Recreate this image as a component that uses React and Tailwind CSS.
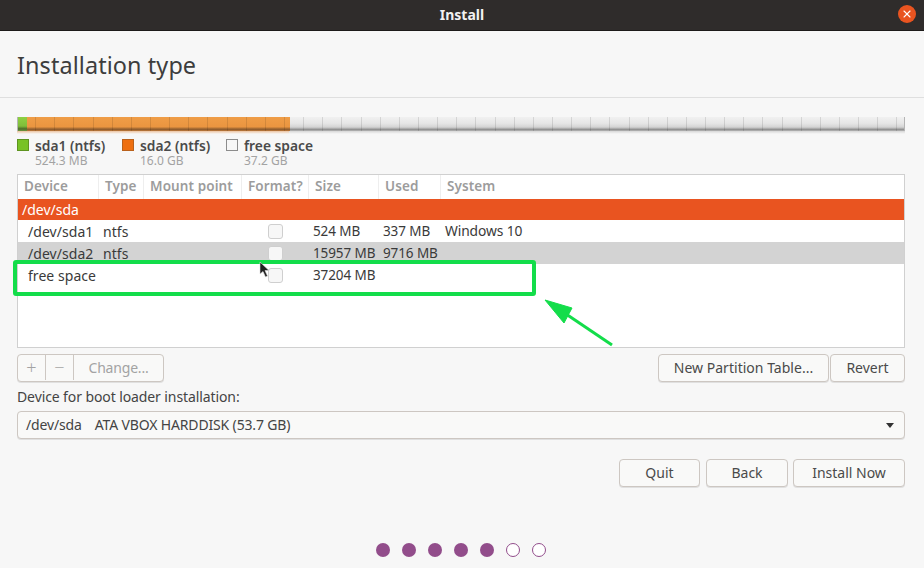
import React from "react";
import { X } from "lucide-react";

const FONT = "font-['Noto_Sans','Open_Sans',sans-serif]";

const legend = [
  { name: "sda1 (ntfs)", size: "524.3 MB", swatch: "bg-[#78c226] border-[#5e9420]", width: "w-[105px]" },
  { name: "sda2 (ntfs)", size: "16.0 GB", swatch: "bg-[#ee6f10] border-[#b9611c]", width: "w-[104px]" },
  { name: "free space", size: "37.2 GB", swatch: "bg-[#f6f6f6] border-[#8c8c8c]", width: "w-[100px]" },
];

const columns = [
  { label: "Device", width: "w-[81px]" },
  { label: "Type", width: "w-[45px]" },
  { label: "Mount point", width: "w-[98px]" },
  { label: "Format?", width: "w-[67px]" },
  { label: "Size", width: "w-[70px]" },
  { label: "Used", width: "w-[62px]" },
  { label: "System", width: "flex-1" },
];

const rows = [
  { device: "/dev/sda1", type: "ntfs", size: "524 MB", used: "337 MB", system: "Windows 10", bg: "bg-white" },
  { device: "/dev/sda2", type: "ntfs", size: "15957 MB", used: "9716 MB", system: "", bg: "bg-[#d3d3d3]" },
  { device: "free space", type: "", size: "37204 MB", used: "", system: "", bg: "bg-white" },
];

const ticks = Array.from({ length: 46 });

const Button = ({ children, className = "" }) => (
  <button
    type="button"
    className={`flex h-[28px] items-center justify-center rounded-[4px] border border-[#cdc7c2] bg-[#f9f9f8] pb-[2px] text-[14px] text-[#4a4a4a] shadow-[0_1px_0_#e0e0e0] ${className}`}
  >
    {children}
  </button>
);

const PartitionBar = () => (
  <div className="relative mt-[19px] h-[14px] w-full">
    <div className="flex h-[14px] w-full border-x border-[#b5b5b5]">
      <div className="h-full w-[9px] bg-[linear-gradient(#8ed043_0%,#7fbd3a_65%,#4c6b2a_85%,#6f9a40_100%)]" />
      <div className="h-full w-[263px] bg-[linear-gradient(#ef9d47_0%,#ea9540_70%,#8b5a2d_88%,#c07a3a_100%)]" />
      <div className="h-full flex-1 bg-[linear-gradient(#f1f1f1_0%,#e6e6e6_45%,#d4d4d4_72%,#8f8f8f_90%,#b9b9b9_100%)]" />
    </div>
    <div className="absolute inset-x-0 top-[14px] flex h-[3px]">
      <div className="h-full w-[272px] bg-[linear-gradient(#ecc3a0,#f8f8f8)]" />
      <div className="h-full flex-1 bg-[linear-gradient(#d6d6d6,#f8f8f8)]" />
    </div>
    <div className="absolute inset-x-0 top-0 flex h-[14px]">
      {ticks.map((_, i) => (
        <div key={i} className="h-full w-[19.15px] shrink-0 border-r border-[#0000001c]" />
      ))}
    </div>
  </div>
);

const Checkbox = () => (
  <span className="mx-auto block h-[15px] w-[15px] rounded-[3px] border border-[#cfcfcf] bg-[#f7f7f7]" />
);

const Cursor = () => (
  <svg className="absolute left-[259px] top-[261px]" width="12" height="18" viewBox="0 0 12 18">
    <path d="M1 1 L1 13 L4 10.5 L6.5 16 L8.5 15 L6 9.5 L10 9.5 Z" fill="#222" stroke="#ddd" strokeWidth="0.6" />
  </svg>
);

const Arrow = () => (
  <svg className="absolute left-[540px] top-[296px]" width="76" height="52" viewBox="0 0 76 52">
    <path d="M5 4 L32 12 L24 27 Z" fill="#13dd4a" stroke="#13dd4a" strokeWidth="1" />
    <path d="M26 18 L72 49" stroke="#13dd4a" strokeWidth="3" fill="none" />
  </svg>
);

export default function App() {
  return (
    <div className={`relative flex h-[568px] w-[924px] flex-col overflow-hidden bg-[#f7f7f7] ${FONT}`}>
      <header className="flex h-[31px] shrink-0 items-center justify-center border-b border-[#1d1b1a] bg-[#2f2c2b] pb-[2px]">
        <span className="text-[14px] font-bold text-[#f2f2f2]">Install</span>
        <span className="absolute right-[8px] top-[5px] flex h-[18px] w-[18px] items-center justify-center rounded-full bg-[#e95420]">
          <X size={12} strokeWidth={2.2} className="text-white" />
        </span>
      </header>

      <div className="flex h-[67px] shrink-0 items-center border-b border-[#dfdfdf] pl-[17px] pt-[3px]">
        <h1 className="text-[23.4px] font-normal tracking-[0.1px] text-[#3d3d3d]">Installation type</h1>
      </div>

      <main className="flex flex-1 flex-col px-[17px] pr-[19px]">
        <PartitionBar />

        <div className="mt-[7px] flex h-[30px]">
          {legend.map((item) => (
            <div key={item.name} className={`flex gap-[6px] ${item.width}`}>
              <span className={`mt-[1px] h-[12px] w-[12px] border ${item.swatch}`} />
              <div className="flex flex-col">
                <span className="text-[13.8px] font-semibold leading-[15px] text-[#4a4a4a]">{item.name}</span>
                <span className="text-[12px] leading-[15px] text-[#a3a3a3]">{item.size}</span>
              </div>
            </div>
          ))}
        </div>

        <div className="mt-[6px] h-[174px] border border-[#d0d0d0] bg-white">
          <div className="flex h-[24px] items-center bg-white">
            {columns.map((col) => (
              <div
                key={col.label}
                className={`flex h-full items-center border-r border-[#eeeeee] pb-[2px] pl-[6px] text-[13.5px] font-semibold tracking-[0.1px] text-[#9c9c9c] last:border-r-0 ${col.width}`}
              >
                {col.label}
              </div>
            ))}
          </div>
          <div className="flex h-[21px] items-center bg-[#e95420] pb-[1px] pl-[4px] text-[14px] text-white">/dev/sda</div>
          {rows.map((row) => (
            <div key={row.device} className={`flex h-[22px] items-center pt-[1px] text-[13.5px] tracking-[-0.1px] text-[#3a3a3a] ${row.bg}`}>
              <span className="w-[85px] pl-[10px] text-[14px] tracking-[0.05px]">{row.device}</span>
              <span className="w-[137px] text-[14px] tracking-[0.05px]">{row.type}</span>
              <span className="w-[73px]">
                <span className="block w-[70px]">
                  <Checkbox />
                </span>
              </span>
              <span className="w-[70px]">{row.size}</span>
              <span className="w-[62px]">{row.used}</span>
              <span className="text-[13.8px]">{row.system}</span>
            </div>
          ))}
        </div>

        <div className="mt-[6px] flex items-center justify-between">
          <div className="flex h-[28px] w-[147px] rounded-[4px] border border-[#cdc7c2] bg-[#f9f9f8] pb-[1px] text-[#a3a3a3] shadow-[0_1px_0_#e0e0e0]">
            <span className="flex w-[28px] items-center justify-center border-r border-[#cdc7c2] text-[18px] font-light">+</span>
            <span className="flex w-[28px] items-center justify-center border-r border-[#cdc7c2] text-[18px] font-light">−</span>
            <span className="flex flex-1 items-center justify-center text-[14px] tracking-[-0.2px]">Change...</span>
          </div>
          <div className="flex">
            <Button className="w-[171px] tracking-[0.02px]">New Partition Table...</Button>
            <Button className="ml-px w-[75px]">Revert</Button>
          </div>
        </div>

        <label className="mt-[5px] h-[20px] text-[14px] leading-[20px] tracking-[-0.1px] text-[#444]">
          Device for boot loader installation:
        </label>

        <div className="mt-[4px] flex h-[28px] items-center justify-between rounded-[4px] border border-[#cdc7c2] bg-[#f9f9f8] pb-[2px] pl-[8px] pr-[10px] text-[14px] tracking-[-0.15px] text-[#444] shadow-[0_1px_0_#e0e0e0]">
          <span className="flex gap-[13px]">
            <span>/dev/sda</span>
            <span>ATA VBOX HARDDISK (53.7 GB)</span>
          </span>
          <span className="mt-[2px] h-0 w-0 border-x-[4.5px] border-t-[5px] border-x-transparent border-t-[#333]" />
        </div>

        <div className="mt-[20px] flex justify-end">
          <Button className="w-[81px]">Quit</Button>
          <Button className="ml-[6px] w-[82px]">Back</Button>
          <Button className="ml-[5px] w-[112px]">Install Now</Button>
        </div>

        <div className="mt-[56px] flex justify-center gap-[12px]">
          {[1, 2, 3, 4, 5].map((n) => (
            <span key={n} className="h-[14px] w-[14px] rounded-full bg-[#924d8b]" />
          ))}
          {[6, 7].map((n) => (
            <span key={n} className="h-[14px] w-[14px] rounded-full border border-[#924d8b] bg-white" />
          ))}
        </div>
      </main>

      <div className="absolute left-[13px] top-[260px] h-[36px] w-[523px] rounded-[3px] border-[4px] border-[#13dd4a]" />
      <Arrow />
      <Cursor />
    </div>
  );
}
